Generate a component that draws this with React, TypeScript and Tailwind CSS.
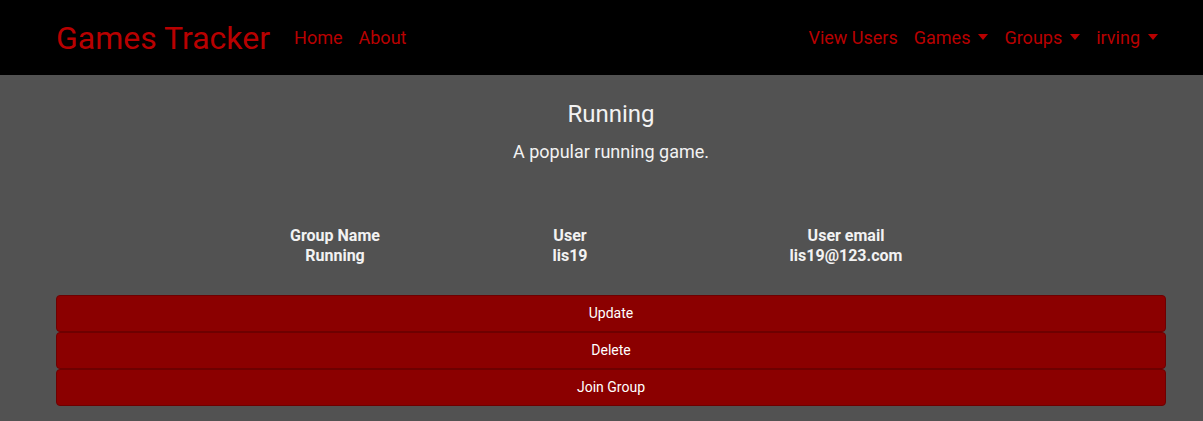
import React from "react";

const Caret = () => (
  <span className="ml-[8px] inline-block align-[4px] border-x-[5.5px] border-t-[6px] border-x-transparent border-t-[#b80000]" />
);

const navLinkClass = "px-2 text-[18px] text-[#b80000] hover:text-[#e00000] cursor-pointer";

const rows = [{ group: "Running", user: "lis19", email: "lis19@123.com" }];

export default function App() {
  return (
    <div className="min-h-[421px] bg-[#525252] font-['Roboto',sans-serif]">
      <nav className="h-[75px] bg-black">
        <div className="ml-[56px] flex h-full w-[1110px] items-center">
          <a className="mr-4 text-[32px] text-[#b80000] leading-none">Games Tracker</a>
          <div className="flex items-center">
            <a className={navLinkClass}>Home</a>
            <a className={navLinkClass}>About</a>
          </div>
          <div className="ml-auto flex items-center">
            <a className={navLinkClass}>View Users</a>
            <a className={navLinkClass}>
              Games
              <Caret />
            </a>
            <a className={navLinkClass}>
              Groups
              <Caret />
            </a>
            <a className={navLinkClass}>
              irving
              <Caret />
            </a>
          </div>
        </div>
      </nav>

      <main className="ml-[56px] w-[1110px] pt-[25px] pb-4">
        <h2 className="text-center text-[24px] leading-[29px] text-[#f2f2f2]">Running</h2>
        <p className="mt-[9px] text-center text-[18px] leading-[27px] text-[#f2f2f2]">
          A popular running game.
        </p>

        <div className="ml-[222px] mt-[61px] w-[666px] text-[16px] font-bold leading-[20px] text-[#f2f2f2]">
          <div className="grid grid-cols-[114px_356px_196px] text-center">
            <div>Group Name</div>
            <div>User</div>
            <div>User email</div>
          </div>
          {rows.map((r) => (
            <div key={r.user} className="grid grid-cols-[114px_356px_196px] text-center">
              <div>{r.group}</div>
              <div>{r.user}</div>
              <div>{r.email}</div>
            </div>
          ))}
        </div>

        <div className="mt-[29px] flex flex-col">
          {["Update", "Delete", "Join Group"].map((label) => (
            <button
              key={label}
              className="h-[37px] w-full rounded-[4px] border border-[#6e0000] bg-[#8b0000] text-[14px] text-white"
            >
              {label}
            </button>
          ))}
        </div>
      </main>
    </div>
  );
}
